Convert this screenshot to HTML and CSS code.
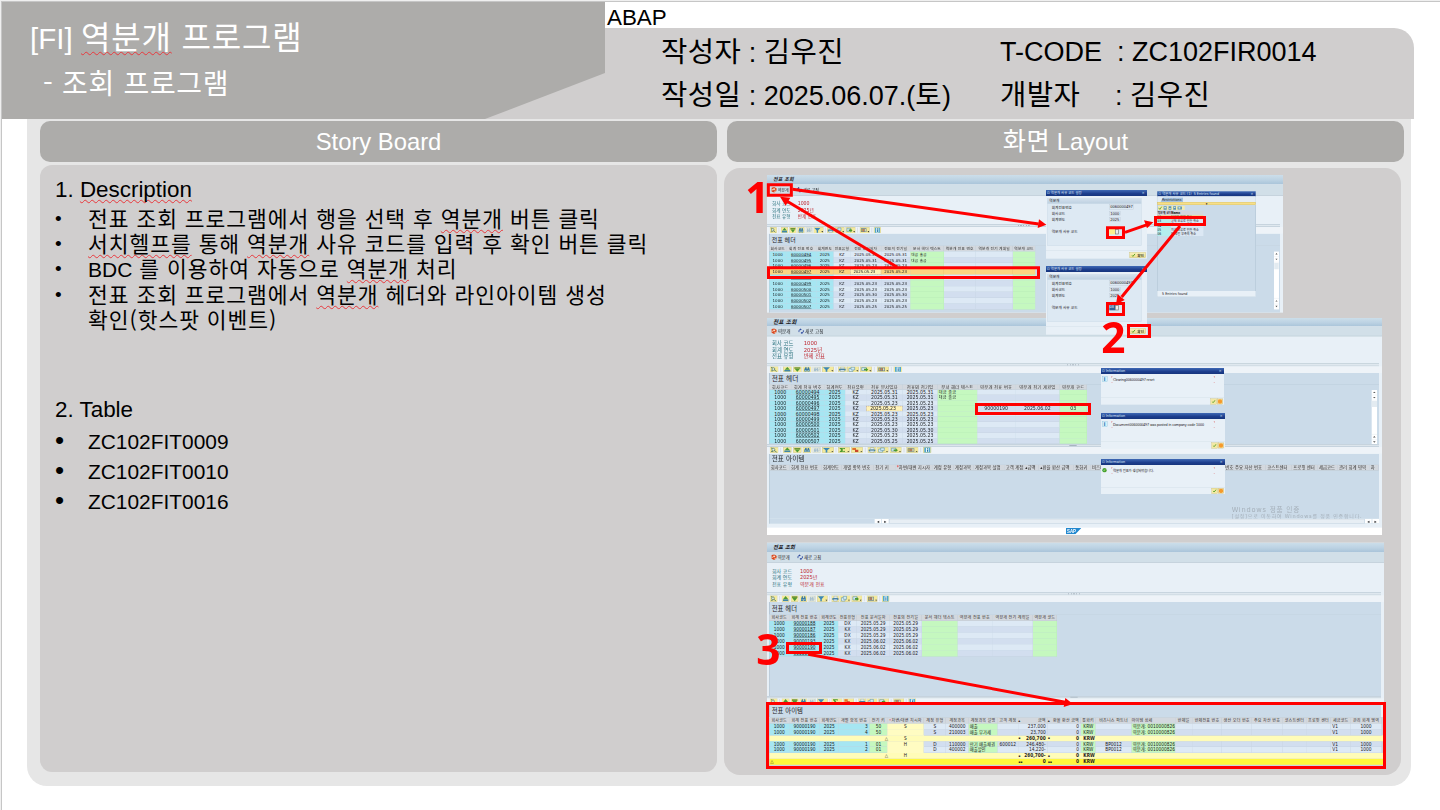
FILE: index.html
```html
<!DOCTYPE html>
<html lang="ko">
<head>
<meta charset="utf-8">
<title>[FI] 역분개 프로그램</title>
<link rel="stylesheet" href="styles.css">
</head>
<body>
<svg width="0" height="0" class="defs">
  <symbol id="i-btn" viewBox="0 0 26 20"><rect x=".5" y=".5" width="25" height="19" fill="#f4ea9c" stroke="#b9b68c"/></symbol>
  <symbol id="i-wide" viewBox="0 0 36 20"><rect x=".5" y=".5" width="35" height="19" fill="#f4ea9c" stroke="#b9b68c"/><path d="M28 13h6l-3 4z" fill="#333"/></symbol>
  <symbol id="i-detail" viewBox="0 0 26 20"><use href="#i-btn"/><circle cx="11" cy="9" r="4.5" fill="#dfeee8" stroke="#47705c" stroke-width="2"/><path d="M14 12l7 5M4 4h4M4 15h6" stroke="#47705c" stroke-width="2.4"/></symbol>
  <symbol id="i-up" viewBox="0 0 26 20"><use href="#i-btn"/><path d="M13 2l8 9H5z" fill="#4d9a35"/><path d="M4 12h18v5H4z" fill="#3f86a8"/></symbol>
  <symbol id="i-down" viewBox="0 0 26 20"><use href="#i-btn"/><path d="M13 18L5 8h16z" fill="#4d9a35"/><path d="M4 3h18v5H4z" fill="#6f9638"/></symbol>
  <symbol id="i-find" viewBox="0 0 26 20"><use href="#i-btn"/><path d="M8 3h4v5h3V3h4l2 7v7h-7v-5h-2v5H5v-7z" fill="#3c7ba4"/><path d="M7 12h3v3H7zM16 12h3v3h-3z" fill="#a9d4e6"/></symbol>
  <symbol id="i-next" viewBox="0 0 26 20"><rect x=".5" y=".5" width="25" height="19" fill="#e4e9dd" stroke="#c9cdb8"/><path d="M7 4h3v5h3V4h3l2 6v6h-5v-4h-2v4H5v-6z" fill="#a7bfce"/><path d="M18 4h4v8h-4" fill="none" stroke="#9fb6c3"/></symbol>
  <symbol id="i-filter" viewBox="0 0 36 20"><use href="#i-wide"/><path d="M3 3h21l-8 8v7h-5v-7z" fill="#3b87b8"/></symbol>
  <symbol id="i-sum" viewBox="0 0 36 20"><use href="#i-wide"/><path d="M5 3h16v5l-2-2h-7l4 4-4 4h7l2-2v5H5v-2l5-5-5-5z" fill="#4c9a2e"/></symbol>
  <symbol id="i-sub" viewBox="0 0 36 20"><use href="#i-wide"/><path d="M4 3h11v7H4z" fill="#e2742c"/><path d="M12 9h10v8H12z" fill="#c9462c"/></symbol>
  <symbol id="i-print" viewBox="0 0 26 20"><use href="#i-btn"/><path d="M8 3h11v5H8z" fill="#fff" stroke="#4d7a96"/><path d="M3 8h20v6H3z" fill="#4a84a6"/><path d="M7 12h12v5H7z" fill="#e8f3f8" stroke="#4d7a96"/></symbol>
  <symbol id="i-view" viewBox="0 0 36 20"><use href="#i-wide"/><path d="M6 7h12v10H6z" fill="#e9f5fa" stroke="#3d7d9f" stroke-width="1.500"/><path d="M12 3h11v9H12z" fill="#d3ebf4" stroke="#3d7d9f" stroke-width="1.500"/></symbol>
  <symbol id="i-export" viewBox="0 0 36 20"><use href="#i-wide"/><path d="M5 4h14v10H5z" fill="#cfe6ee" stroke="#3d7d9f" stroke-width="1.500"/><path d="M12 8h6V5l7 6-7 6v-4h-6z" fill="#4c9a2e"/></symbol>
  <symbol id="i-grid" viewBox="0 0 36 20"><use href="#i-wide"/><path d="M4 4h20v12H4z" fill="#6a8390"/><path d="M6 6h4v8H6z" fill="#d4af55"/><path d="M12 6h4v8h-4z" fill="#dd7b45"/><path d="M18 6h4v8h-4z" fill="#e6e2b0"/></symbol>
  <symbol id="i-info" viewBox="0 0 26 20"><use href="#i-btn"/><path d="M4 2h18v16H4z" fill="#4ea6cf"/><path d="M9 3h8v14H9z" fill="#eef9fd"/><path d="M12 4h3v3h-3zM12 8h3v8h-3z" fill="#256f9a"/></symbol>
  <symbol id="tb-head" viewBox="0 0 398 20" preserveAspectRatio="none">
    <use href="#i-detail" width="26" height="20"/><use href="#i-up" x="40" width="26" height="20"/><use href="#i-down" x="70" width="26" height="20"/><use href="#i-find" x="99" width="26" height="20"/><use href="#i-next" x="128" width="26" height="20"/><use href="#i-filter" x="157" width="36" height="20"/><use href="#i-print" x="205" width="26" height="20"/><use href="#i-view" x="232" width="36" height="20"/><use href="#i-export" x="271" width="36" height="20"/><use href="#i-grid" x="322" width="36" height="20"/><use href="#i-info" x="372" width="26" height="20"/>
    <path d="M33 2v16M199 2v16M314 2v16M365 2v16" stroke="#aab6bf"/>
  </symbol>
  <symbol id="tb-item" viewBox="0 0 486 20" preserveAspectRatio="none">
    <use href="#i-detail" width="26" height="20"/><use href="#i-up" x="40" width="26" height="20"/><use href="#i-down" x="70" width="26" height="20"/><use href="#i-find" x="99" width="26" height="20"/><use href="#i-next" x="128" width="26" height="20"/><use href="#i-filter" x="157" width="36" height="20"/><use href="#i-sum" x="205" width="36" height="20"/><use href="#i-sub" x="244" width="36" height="20"/><use href="#i-print" x="294" width="26" height="20"/><use href="#i-view" x="321" width="36" height="20"/><use href="#i-export" x="360" width="36" height="20"/><use href="#i-grid" x="410" width="36" height="20"/><use href="#i-info" x="460" width="26" height="20"/>
    <path d="M33 2v16M199 2v16M287 2v16M403 2v16M453 2v16" stroke="#aab6bf"/>
  </symbol>
  <symbol id="i-reverse" viewBox="0 0 20 18"><path d="M3 2l8-2 8 5-1 8-7 5-8-4z" fill="#d9461e"/><path d="M3 9l7-4-1-3 6 4-5 5v-3l-5 3zM12 13l4-2v3l-4 2z" fill="#fbe7cf"/></symbol>
  <symbol id="i-refresh" viewBox="0 0 20 18"><path d="M3 12a7 7 0 0 1 5-9M17 6a7 7 0 0 1-5 9" fill="none" stroke="#22409a" stroke-width="2.500"/><path d="M6 0l6 3-5 4zM14 18l-6-3 5-4z" fill="#22409a"/></symbol>
  <symbol id="i-ok" viewBox="0 0 14 12"><path d="M1 6l4 4 8-9" fill="none" stroke="#4c9a1e" stroke-width="3"/></symbol>
  <symbol id="i-scroll" viewBox="0 0 18 166" preserveAspectRatio="none"><path d="M0 0h18v166H0z" fill="#fff"/><path d="M1 33h16v18H1z" fill="#e3ebf1"/><path d="M5 9l4-4 4 4zM5 21l4 4 4-4zM5 143l4-4 4 4zM5 155l4 4 4-4z" fill="#555"/><path d="M0 15h18M0 31h18M0 134h18M0 150h18" stroke="#dbe3ea"/></symbol>
</svg>

<div class="slide">
  <header class="top">
    <div class="title">
      <h1><i>[FI]</i><span class="typo">역분개</span> 프로그램</h1>
      <h2>- 조회 프로그램</h2>
    </div>
    <div class="meta">
      <div class="lang">ABAP</div>
      <dl class="facts">
        <div><span class="k"><b>작성자</b> :</span> <b>김우진</b></div>
        <div class="tc">T-CODE&nbsp; : ZC102FIR0014</div>
        <div><span class="k"><b>작성일</b> :</span> 2025.06.07.(<b>토</b>)</div>
        <div class="dev"><b>개발자</b><span>: <b>김우진</b></span></div>
      </dl>
    </div>
  </header>

  <main class="board">
    <section class="col">
      <h3>Story Board</h3>
      <div class="story">
        <h4>1. <span class="typo">Description</span></h4>
        <ul class="desc">
          <li><span>전표 조회 프로그램에서 행을 선택 후 <span class="typo">역분개</span> 버튼 클릭</span></li>
          <li><span><span class="typo">서치헬프를</span> 통해 <span class="typo">역분개</span> 사유 코드를 입력 후 확인 버튼 클릭</span></li>
          <li><span><i>BDC</i> 를 이용하여 자동으로 <span class="typo">역분개</span> 처리</span></li>
          <li><span>전표 조회 프로그램에서 <span class="typo">역분개</span> 헤더와 라인아이템 생성<br>확인(핫스팟 이벤트)</span></li>
        </ul>
        <h4>2. Table</h4>
        <ul class="tables"><li>ZC102FIT0009</li><li>ZC102FIT0010</li><li>ZC102FIT0016</li></ul>
      </div>
    </section>

    <section class="col right">
      <h3><b>화면</b> Layout</h3>
      <div class="layout"><div class="fit"><div class="stage">

        <article class="win w1">
          <div class="bar">전표 조회</div>
          <div class="tools"><svg><use href="#i-reverse"/></svg><span>역분개</span><svg><use href="#i-refresh"/></svg><span>새로 고침</span></div>
          <div class="info"><span>회사 코드</span><em>1000</em><span>회계 연도</span><em>2025년</em><span>전표 유형</span><em>반제 전표</em></div>
          <div class="split"></div>
          <div class="icons"><svg><use href="#tb-head"/></svg></div>
          <div class="cap">전표 헤더</div>
          <div class="body">
          <div class="grid keyed">
            <div class="row th"><span>회사코드</span><span>회계 전표 번호</span><span>회계연도</span><span>전표유형</span><span>전표 문서일자</span><span>전표의 전기일</span><span>문서 헤더 텍스트</span><span>역분개 전표 번호</span><span>역분개 전기 계획일</span><span>역분개 코드</span></div>
            <div class="row"><span>1000</span><span>60000494</span><span>2025</span><span>KZ</span><span>2025.05.31</span><span>2025.05.31</span><span>대금 출금</span><span></span><span></span><span></span></div>
            <div class="row"><span>1000</span><span>60000495</span><span>2025</span><span>KZ</span><span>2025.05.31</span><span>2025.05.31</span><span>대금 출금</span><span></span><span></span><span></span></div>
            <div class="row"><span>1000</span><span>60000496</span><span>2025</span><span>KZ</span><span>2025.05.23</span><span>2025.05.23</span><span></span><span></span><span></span><span></span></div>
            <div class="row picked"><span>1000</span><span>60000497</span><span>2025</span><span>KZ</span><span class="edit">2025.05.23</span><span>2025.05.23</span><span></span><span></span><span></span><span></span></div>
            <div class="row"><span>1000</span><span>60000498</span><span>2025</span><span>KZ</span><span>2025.05.23</span><span>2025.05.23</span><span></span><span></span><span></span><span></span></div>
            <div class="row"><span>1000</span><span>60000499</span><span>2025</span><span>KZ</span><span>2025.05.23</span><span>2025.05.23</span><span></span><span></span><span></span><span></span></div>
            <div class="row"><span>1000</span><span>60000500</span><span>2025</span><span>KZ</span><span>2025.05.23</span><span>2025.05.23</span><span></span><span></span><span></span><span></span></div>
            <div class="row"><span>1000</span><span>60000501</span><span>2025</span><span>KZ</span><span>2025.05.30</span><span>2025.05.30</span><span></span><span></span><span></span><span></span></div>
            <div class="row"><span>1000</span><span>60000502</span><span>2025</span><span>KZ</span><span>2025.05.23</span><span>2025.05.23</span><span></span><span></span><span></span><span></span></div>
            <div class="row"><span>1000</span><span>60000507</span><span>2025</span><span>KZ</span><span>2025.05.25</span><span>2025.05.25</span><span></span><span></span><span></span><span></span></div>
          </div>
          <svg class="scroll"><use href="#i-scroll"/></svg>
          </div>
        </article>

        <article class="win w2">
          <div class="bar">전표 조회</div>
          <div class="tools"><svg><use href="#i-reverse"/></svg><span>역분개</span><svg><use href="#i-refresh"/></svg><span>새로 고침</span></div>
          <div class="info"><span>회사 코드</span><em>1000</em><span>회계 연도</span><em>2025년</em><span>전표 유형</span><em>반제 전표</em></div>
          <div class="split"></div>
          <div class="icons"><svg><use href="#tb-head"/></svg></div>
          <div class="cap">전표 헤더</div>
          <div class="body">
          <div class="grid keyed">
            <div class="row th"><span>회사코드</span><span>회계 전표 번호</span><span>회계연도</span><span>전표유형</span><span>전표 문서일자</span><span>전표의 전기일</span><span>문서 헤더 텍스트</span><span>역분개 전표 번호</span><span>역분개 전기 계획일</span><span>역분개 코드</span></div>
            <div class="row"><span>1000</span><span>60000494</span><span>2025</span><span>KZ</span><span>2025.05.31</span><span>2025.05.31</span><span>대금 출금</span><span></span><span></span><span></span></div>
            <div class="row"><span>1000</span><span>60000495</span><span>2025</span><span>KZ</span><span>2025.05.31</span><span>2025.05.31</span><span>대금 출금</span><span></span><span></span><span></span></div>
            <div class="row"><span>1000</span><span>60000496</span><span>2025</span><span>KZ</span><span>2025.05.23</span><span>2025.05.23</span><span></span><span></span><span></span><span></span></div>
            <div class="row"><span>1000</span><span>60000497</span><span>2025</span><span>KZ</span><span class="edit">2025.05.23</span><span>2025.05.23</span><span></span><span>90000190</span><span>2025.06.02</span><span>03</span></div>
            <div class="row"><span>1000</span><span>60000498</span><span>2025</span><span>KZ</span><span>2025.05.23</span><span>2025.05.23</span><span></span><span></span><span></span><span></span></div>
            <div class="row"><span>1000</span><span>60000499</span><span>2025</span><span>KZ</span><span>2025.05.23</span><span>2025.05.23</span><span></span><span></span><span></span><span></span></div>
            <div class="row"><span>1000</span><span>60000500</span><span>2025</span><span>KZ</span><span>2025.05.23</span><span>2025.05.23</span><span></span><span></span><span></span><span></span></div>
            <div class="row"><span>1000</span><span>60000501</span><span>2025</span><span>KZ</span><span>2025.05.30</span><span>2025.05.30</span><span></span><span></span><span></span><span></span></div>
            <div class="row"><span>1000</span><span>60000502</span><span>2025</span><span>KZ</span><span>2025.05.23</span><span>2025.05.23</span><span></span><span></span><span></span><span></span></div>
            <div class="row"><span>1000</span><span>60000507</span><span>2025</span><span>KZ</span><span>2025.05.25</span><span>2025.05.25</span><span></span><span></span><span></span><span></span></div>
          </div>
          <svg class="scroll"><use href="#i-scroll"/></svg>
          </div>
          <div class="split low"></div>
          <div class="icons"><svg class="wide"><use href="#tb-item"/></svg></div>
          <div class="cap">전표 아이템</div>
          <div class="body items">
            <div class="row th"><span>회사코드</span><span>회계 전표 번호</span><span>회계연도</span><span>개별 항목 번호</span><span>전기 키</span><span><u>*</u>차변/대변 지시자</span><span>계정 유형</span><span>계정과목</span><span>계정과목 설명</span><span>고객 계정</span><span>▴금액</span><span>▴환율 환산 금액</span><span>통화키</span><span>비즈니스 파트너</span><span>아이템 상세</span><span>반제일</span><span>생산 오더 번호</span><span>주요 자산 번호</span><span>코스트센터</span><span>프로핏 센터</span><span>세금코드</span><span>관리 회계 영역</span><span>차</span></div>
            <div class="mark"><strong>Windows 정품 인증</strong><span>[설정]으로 이동하여 Windows를 정품 인증합니다.</span></div>
          </div>
          <div class="hscroll"><span>◂</span><span>▸</span><div></div><span>◂</span><span>▸</span></div>
          <footer><svg viewBox="0 0 46 19"><path d="M0 0h46L28 19H0z" fill="#2288cf"/><text x="3" y="15" textLength="27" lengthAdjust="spacingAndGlyphs">SAP</text></svg></footer>
        </article>

        <article class="win w3">
          <div class="bar">전표 조회</div>
          <div class="tools"><svg><use href="#i-reverse"/></svg><span>역분개</span><svg><use href="#i-refresh"/></svg><span>새로 고침</span></div>
          <div class="info"><span>회사 코드</span><em>1000</em><span>회계 연도</span><em>2025년</em><span>전표 유형</span><em>역분개 전표</em></div>
          <div class="split"></div>
          <div class="icons"><svg><use href="#tb-head"/></svg></div>
          <div class="cap">전표 헤더</div>
          <div class="body">
          <div class="grid keyed">
            <div class="row th"><span>회사코드</span><span>회계 전표 번호</span><span>회계연도</span><span>전표유형</span><span>전표 문서일자</span><span>전표의 전기일</span><span>문서 헤더 텍스트</span><span>역분개 전표 번호</span><span>역분개 전기 계획일</span><span>역분개 코드</span></div>
            <div class="row"><span>1000</span><span>90000188</span><span>2025</span><span>DX</span><span>2025.05.29</span><span>2025.05.29</span><span></span><span></span><span></span><span></span></div>
            <div class="row"><span>1000</span><span>90000187</span><span>2025</span><span>KX</span><span>2025.05.29</span><span>2025.05.29</span><span></span><span></span><span></span><span></span></div>
            <div class="row"><span>1000</span><span>90000186</span><span>2025</span><span>DX</span><span>2025.05.29</span><span>2025.05.29</span><span></span><span></span><span></span><span></span></div>
            <div class="row"><span>1000</span><span>90000193</span><span>2025</span><span>KX</span><span>2025.06.02</span><span>2025.06.02</span><span></span><span></span><span></span><span></span></div>
            <div class="row"><span>1000</span><span>90000190</span><span>2025</span><span>KX</span><span>2025.06.02</span><span>2025.06.02</span><span></span><span></span><span></span><span></span></div>
            <div class="row"><span>1000</span><span>90000189</span><span>2025</span><span>KX</span><span>2025.06.02</span><span>2025.06.02</span><span></span><span></span><span></span><span></span></div>
          </div>
          </div>
          <div class="split low"></div>
          <div class="icons"><svg class="wide"><use href="#tb-item"/></svg></div>
          <div class="cap">전표 아이템</div>
          <div class="body items">
            <div class="row th"><span>회사코드</span><span>회계 전표 번호</span><span>회계연도</span><span>개별 항목 번호</span><span>전기 키</span><span><u>*</u>차변/대변 지시자</span><span>계정 유형</span><span>계정과목</span><span>계정과목 설명</span><span>고객 계정</span><span class="amt">금액</span><span class="amt">환율 환산 금액</span><span>통화키</span><span>비즈니스 파트너</span><span class="l">아이템 상세</span><span>반제일</span><span>반제전표 번호</span><span>생산 오더 번호</span><span>주요 자산 번호</span><span>코스트센터</span><span>프로핏 센터</span><span>세금코드</span><span>관리 회계 영역</span></div>
            <div class="row"><span>1000</span><span>90000190</span><span>2025</span><span>3</span><span>50</span><span>S</span><span>S</span><span>400000</span><span>매출</span><span></span><span>237,000</span><span>0</span><span>KRW</span><span></span><span>역분개: 0010000826</span><span></span><span></span><span></span><span></span><span></span><span></span><span>V1</span><span>1000</span></div>
            <div class="row"><span>1000</span><span>90000190</span><span>2025</span><span>4</span><span>50</span><span></span><span>S</span><span>210003</span><span>매출 부가세</span><span></span><span>23,700</span><span>0</span><span>KRW</span><span></span><span>역분개: 0010000826</span><span></span><span></span><span></span><span></span><span></span><span></span><span>V1</span><span>1000</span></div>
            <div class="row sum"><span></span><span></span><span></span><span></span><span>△</span><span>S</span><span></span><span></span><span></span><span></span><span><i>▪</i>260,700</span><span><i>▪</i>0</span><span>KRW</span></div>
            <div class="row"><span>1000</span><span>90000190</span><span>2025</span><span>1</span><span>01</span><span>H</span><span>D</span><span>110000</span><span>만기 매출채권</span><span>600012</span><span>246,480-</span><span>0</span><span>KRW</span><span>BP0012</span><span>역분개: 0010000826</span><span></span><span></span><span></span><span></span><span></span><span></span><span>V1</span><span>1000</span></div>
            <div class="row"><span>1000</span><span>90000190</span><span>2025</span><span>2</span><span>01</span><span></span><span>D</span><span>400002</span><span>매출할인</span><span></span><span>14,220-</span><span>0</span><span>KRW</span><span>BP0012</span><span>역분개: 0010000826</span><span></span><span></span><span></span><span></span><span></span><span></span><span>V1</span><span>1000</span></div>
            <div class="row sum"><span></span><span></span><span></span><span></span><span>△</span><span>H</span><span></span><span></span><span></span><span></span><span><i>▪</i>260,700-</span><span><i>▪</i>0</span><span>KRW</span></div>
            <div class="row sum total"><span>△</span><span></span><span></span><span></span><span></span><span></span><span></span><span></span><span></span><span></span><span><i>▪▪</i>0</span><span><i>▪▪</i>0</span><span>KRW</span></div>
          </div>
        </article>

        <!-- dialogs lying over the windows -->
        <div class="pop msg a"><div class="pt"><span>⊡ Information</span><span>×</span></div><div class="pm"><b class="ic">i</b><p>Clearing0060000497 reset</p></div><div class="pf"><svg><use href="#i-ok"/></svg><i></i></div></div>
        <div class="pop msg b"><div class="pt"><span>⊡ Information</span><span>×</span></div><div class="pm"><b class="ic">i</b><p>Document0060000497 was posted in company code 1000</p></div><div class="pf"><svg><use href="#i-ok"/></svg><i></i></div></div>
        <div class="pop msg c"><div class="pt"><span>⊡ Information</span><span>×</span></div><div class="pm"><b class="ic ok">✓</b><p>역분개 전표가 생성되었습니다.</p></div><div class="pf"><svg><use href="#i-ok"/></svg><i></i></div></div>

        <div class="pop ask d"><div class="pt"><span>⊡ 역분개 사유 코드 설정</span><span>×</span></div>
          <div class="box"><h5>역분개</h5><dl><dt>회계전표번호</dt><dd>0060000497</dd><dt>회사코드</dt><dd>1000</dd><dt>회계연도</dt><dd>2025</dd><dt class="gap">역분개 사유 코드</dt><dd class="gap in"><s></s><q></q></dd></dl></div>
          <div class="pf"><button><svg><use href="#i-ok"/></svg>확인</button></div></div>
        <div class="pop find f"><div class="pt"><span>⊡ 역분개 사유 코드 (1)&nbsp; 5 Entries found</span><span>×</span></div>
          <div class="tab"><span>Restrictions</span></div><div class="drop">▾</div>
          <div class="fi"><svg viewBox="0 0 88 15"><path d="M0 0h86v15H0z" fill="#f3ecb0"/><path d="M2 7l4 5 6-9" stroke="#4c9a1e" stroke-width="2.500" fill="none"/><path d="M18 2h10v11H18zM34 2h9v11h-9zM49 2h9v11h-9zM63 3h14v9H63z" fill="#5d95ae"/><path d="M20 5h6v3h-6zM36 8h5v3h-5zM51 4h5v3h-5zM66 5h6v4h-6z" fill="#eaf5f9"/></svg></div>
          <div class="frow fh"><span>역분개 코드</span><span>Name</span></div>
          <div class="frow sel"><span>01</span><span>당기의 반제 취소</span></div><div class="frow"><span>03</span><span>실제 오류로 인한 취소</span></div><div class="frow"><span>04</span><span></span></div><div class="frow"><span>05</span><span>지급 오류로 인한 취소</span></div><div class="frow"><span>06</span><span>인 경험 부족의 취소</span></div>
          <div class="ff">5 Entries found</div></div>
        <div class="pop ask e"><div class="pt"><span>⊡ 역분개 사유 코드 설정</span><span>×</span></div>
          <div class="box"><h5>역분개</h5><dl><dt>회계전표번호</dt><dd>0060000497</dd><dt>회사코드</dt><dd>1000</dd><dt>회계연도</dt><dd>2025</dd><dt class="gap">역분개 사유 코드</dt><dd class="gap in"><s class="on">03</s><q></q></dd></dl></div>
          <div class="pf"><button><svg><use href="#i-ok"/></svg>확인</button></div></div>

        <!-- step markers -->
        <svg class="marks" viewBox="-90 0 1950 1790">
          <g fill="none" stroke="#f00" stroke-width="9">
            <path d="M4 29.500h69v31H4zM4.500 278.500h810v29H4.500zM1021.500 158.500h48v29h-48zM1165.500 127.500h147v21h-147zM1021.500 385.500h48v33h-48zM1084.500 451.500h63v33h-63zM628.500 688.500h339v27h-339zM61.500 1405.500h99v27H61.500zM1.500 1585.500h1851v192H1.500z"/>
            <path d="M77 43L815 147M390 276L59 78M1074 172L1141 149M1239 153L1064 366M124 1438L895 1582"/>
          </g>
          <path d="M838 149l-26 10 4-26zM39 65l31 3-14 24zM1159 142l-19 18-9-24zM1047 388l5-30 21 17zM918 1587l-28 9 5-27z" fill="#f00"/>
          <g class="num"><text x="-65" y="113">1</text><text x="1003" y="533">2</text><text x="-32" y="1471">3</text></g>
        </svg>
      </div></div></div>
    </section>
  </main>
</div>
</body>
</html>
```
FILE: styles.css
```css
* { box-sizing: border-box; }
body { margin: 0; background: #fff; overflow: hidden; }
h1, h2, h3, h4, h5, ul, dl, dd, p { margin: 0; padding: 0; font-weight: 400; }
b, i, em { font-weight: 400; font-style: normal; }
.defs { position: absolute; }

.slide { width: 1440px; height: 810px; padding: 1px 0 0 1px; border-top: 1px solid #efefef; border-left: 1px solid #efefef; box-shadow: inset 1px 1px #c6c6c6; font-family: "Liberation Sans", "Noto Sans CJK KR", sans-serif; color: #000; white-space: nowrap; }

.top { display: flex; width: 1412px; height: 117px; background: linear-gradient(#d0cece, #d0cece) 400px 0 / 300px 117px no-repeat; }
.title { width: 603px; padding: 9px 0 0 28px; background: #adacaa; color: #fff; clip-path: polygon(0 0, 100% 0, 100% 71px, 483px 100%, 0 100%); font-family: "Noto Sans CJK KR", sans-serif; }
.title h1 { font-size: 32px; line-height: 48px; letter-spacing: .8px; }
.title h1 i { display: inline-block; width: 51px; font: 29.500px/40px "Liberation Sans", sans-serif; letter-spacing: 0; }
.title h2 { padding: 1px 0 0 13px; font-size: 28px; line-height: 44px; letter-spacing: .7px; }
.typo { text-decoration: underline wavy #e8383d 1px; text-decoration-skip-ink: none; text-underline-offset: 2px; }

.meta { flex: 1; display: flex; flex-direction: column; }
.lang { height: 26px; padding: 3px 0 0 2px; background: #fff; font-size: 22.400px; line-height: 26px; }
.facts { flex: 1; display: grid; grid-template-columns: 339px 1fr; grid-template-rows: 43px 43px; padding: 3px 0 0 56px; background: #d0cece; clip-path: inset(0 0 0 0 round 0 20px 0 0); font-size: 27px; line-height: 42px; }
.facts b, h3 b { font-size: 1.06em; letter-spacing: .4px; }
.dev { display: flex; }
.dev > b { width: 115px; }

.board { display: flex; gap: 10px; width: 1384px; height: 667px; margin-left: 25px; padding: 2px 7px 0 13px; background: #e6e6e6; border-radius: 0 0 20px 20px; }
.col { width: 677px; }
.col h3 { height: 41px; border-radius: 10px; background: #adacaa; color: #fff; font-size: 23.800px; line-height: 41px; text-align: center; }
.story { height: 607px; margin-top: 3px; padding: 11px 15px; border-radius: 12px; background: #d0cece; }
.story h4 { font-size: 22.400px; line-height: 28px; }
.story ul { list-style: none; }
.story li { display: flex; }
.story li::before { content: "•"; width: 33px; }
.desc { height: 192px; padding-top: 1px; font: 21.500px/25.200px "Noto Sans CJK KR", sans-serif; letter-spacing: .95px; }
.desc li::before { font: 19px/27px "Liberation Sans", sans-serif; letter-spacing: 0; }
.desc li { height: 25.2px; }
.desc i { font: 21px/1 "Liberation Sans", sans-serif; letter-spacing: 0; }
.tables { padding-top: 3px; font-size: 20.900px; line-height: 30px; }
.tables li::before { font-size: 26px; line-height: 27px; }
.layout { width: 677px; height: 607px; margin: 6px 0 0 -3px; padding: 7px 14px 0 13px; border-radius: 16px; background: #d0cece; }

/* The screen captures are laid out at three times their shown size. */
.fit { width: 650px; height: 598px; }
.stage { position: relative; width: 1950px; height: 1790px; padding-left: 90px; transform: scale(.33333); transform-origin: 0 0; font-family: "DejaVu Sans", "Noto Sans CJK KR", sans-serif; color: #1d2024; }

.win { display: flex; flex-direction: column; overflow: hidden; background: #e8f0f7; font-size: var(--f); }
.w1 { --f: 12px; --rh: 17.4px; --cols: 51px 90px 52px 50px 93px 87px 101px 95px 112px 67px; width: 1548px; height: 413px; --bar: 28px; --tool: 35px; --info: 84px; --line: 19px; --cap: 35px; --tb: 334px; --val: 77px; --lf: 14px; --cf: 18px; }
.w2 { --f: 14px; --rh: 16.2px; --cols: 66px 99px 63px 63px 109px 105px 119px 114px 133px 82px; width: 1845px; height: 651px; margin-top: 16px; --bar: 25px; --tool: 30px; --info: 81px; --line: 18px; --cap: 33px; --tb: 398px; --val: 95px; --lf: 16px; --cf: 20px;
  --icols: 61px 96px 61px 96px 64px 111px 64px 60px 92px 59px 45px 105px 50px 105px 115px 55px 154px 97px 78px 77px 60px 95px 28px; }
.w3 { --f: 13px; --rh: 17.7px; --cols: 60px 92px 55px 56px 98px 97px 107px 104px 122px 72px; width: 1851px; height: 673px; margin-top: 23px; --bar: 28px; --tool: 33px; --info: 88px; --line: 20px; --cap: 38px; --tb: 360px; --val: 84px; --lf: 15px; --cf: 19px;
  --icols: 60px 92px 56px 93px 53px 110px 66px 68px 87px 62px 88px 100px 44px 108px 131px 51px 89px 89px 93px 71px 74px 59px 93px; }
.win > * { flex-shrink: 0; }
.bar { height: var(--bar); padding-left: 18px; background: linear-gradient(#ccdeea, #bcd2e3 55%, #a9c4d9); font-size: calc(var(--cf) - 3px); font-weight: 700; font-style: italic; line-height: var(--bar); letter-spacing: .4px; }
.tools { display: flex; align-items: center; height: var(--tool); padding-left: 11px; background: #d1dfe8; border-bottom: 2px solid #c0ced9; }
.tools svg { width: 19px; height: 17px; margin-right: 2px; }
.tools span { margin-right: 22px; }
.info { display: grid; grid-template-columns: var(--val) 1fr; grid-auto-rows: 19px; align-content: center; height: var(--info); padding: 0 0 0 15px; color: #27707c; font-size: var(--lf); line-height: 19px; }
.info em { color: #bd2630; }
.split { height: 9px; margin-right: 9px; border: solid #bccbd6; border-width: 2px 0 2px; background: repeating-linear-gradient(90deg, #aab6c0 0 4px, transparent 4px 8px) 50% 50% / 36px 3px no-repeat, #dfe8ef; }
.split.low { background: linear-gradient(#a9b5c0, #a9b5c0) 50% 50% / 22px 3px no-repeat, #dce5ec; }
.icons { height: 20px; padding-left: 8px; background: #eef3f8; }
.icons svg { display: block; width: var(--tb); height: var(--line); }
.icons .wide { width: calc(var(--tb) * 1.221); }
.cap { height: var(--cap); margin: 0 9px 0 7px; padding-left: 5px; background: #cbdbe9; border-left: 2px solid #aabccb; font-size: var(--cf); line-height: var(--cap); }
.body { display: flex; justify-content: space-between; margin: 0 9px 0 7px; background: #cbdbe9; border-top: 1px solid #b5c6d5; box-shadow: inset 2px 0 #b2c3d1; }
.w1 .body { flex: 1; padding-right: 3px; }
.w1 .scroll { width: 15px; height: 175px; margin-top: 17px; }
.w2 .scroll { width: 18px; height: 165px; margin: 17px 5px 0 0; }
.w2 .body:not(.items) { height: 180px; }
.w3 .body:not(.items) { height: 244px; }
.w3 .split.low { height: 7px; }
.w3 .split.low + .icons { height: 19px; }
.row { display: grid; grid-template-columns: var(--cols); height: var(--rh); line-height: calc(var(--rh) + 1px); text-align: center; }
.row span { overflow: hidden; height: var(--rh); border: solid #c1cfde; border-width: 0 1px 1px 0; background: #dde9f5; }
.row:nth-child(odd) span { background: #d2deef; }
.row.th span { background: #d3d8de; border-color: #b9c3cd; color: #333; font-size: .93em; letter-spacing: .5px; }
.keyed .row:not(.th) span:nth-child(-n+3) { background: #a6e6f2; }
.keyed .row:not(.th) span:nth-child(2) { text-decoration: underline; }
.keyed .row:not(.th) span:nth-child(7), .keyed .row:not(.th) span:nth-child(10) { background: #c5f8bf; border-color: #b4e8b4; }
.keyed .row:not(.th) span:nth-child(7) { padding-left: 3px; text-align: left; font-size: .88em; letter-spacing: .8px; }
.keyed .row.picked span:nth-child(n) { background: #fdd680; border-color: #e6bd6a; }
.keyed .row .edit { background: #fff3b8 !important; outline: 1px dashed #976; outline-offset: -1px; padding-right: 8px; letter-spacing: -.3px; }
.items { display: block; position: relative; }
.items .row { grid-template-columns: var(--icols); }
.items .th span { overflow: visible; }
.items u { color: #e22; text-decoration: none; }
.w2 .items { height: 162px; overflow: hidden; }
.w2 .items .th { text-align: left; }
.w2 .items .th span { padding-left: 4px; letter-spacing: .1px; overflow: hidden; }
.w2 .items .th span:nth-child(17) { text-align: right; }
.w3 .items { flex: 1; background: #cdd5dc; margin-right: 0; overflow: hidden; }
.w3 .items .row:not(.th) span:nth-child(-n+4) { background: #a6e6f2; }
.w3 .items .row:not(.th) span:nth-child(4) { text-align: right; padding-right: 5px; }
.w3 .items .row:not(.th) span:nth-child(5), .w3 .items .row:not(.th) span:nth-child(9), .w3 .items .row:not(.th) span:nth-child(13), .w3 .items .row:not(.th) span:nth-child(15) { background: #c5f8bf; text-align: left; padding-left: 3px; }
.w3 .items .row:not(.th) span:nth-child(5) { padding-left: 18px; }
.w3 .items .row:not(.th) span:nth-child(13) { padding-left: 7px; }
.w3 .items .row:not(.th) span:nth-child(6) { background: #fffcc2; border-bottom-color: #fffcc2; }
.w3 .items .row span:nth-child(11), .w3 .items .row span:nth-child(12) { text-align: right; padding-right: 5px; }
.w3 .items .row:not(.th) span:nth-child(22) { text-align: left; padding-left: 4px; }
.w3 .items .row.sum:not(.th) span:nth-child(n) { background: none; border-color: transparent; }
.w3 .items .row.sum span:nth-child(n+11) { overflow: visible; font-weight: 700; }
.w3 .items .row.sum { background: #fffcb8; border-bottom: 1px solid #dfdca8; }
.w3 .items .row.total { background: #fff83c; }
.w3 .items .row.total span:first-child { text-align: left; padding-left: 3px; }
.w3 .items .row span:nth-child(5) { overflow: visible; }
.w3 .items .sum span:nth-child(5) { padding-left: 45px !important; }
.sum i { float: left; font-size: 9px; }
.l { text-align: left; }
.amt::before { content: "▴"; float: left; }
.mark { display: flex; flex-direction: column; position: absolute; left: 1387px; top: 123px; color: #a5b0ba; font-size: 15px; line-height: 20px; letter-spacing: 2.300px; }
.mark strong { font-size: 20px; font-weight: 400; }
.hscroll { display: flex; gap: 2px; height: 15px; margin: 0 9px 0 7px; padding: 1px 0 1px 314px; background: #cbdbe9; border-left: 2px solid #b2c3d1; font-size: 13px; line-height: 13px; text-align: center; }
.hscroll span { width: 20px; background: #fff; }
.hscroll div { flex: 1; border: 1px solid #c8d3dc; background: #e7eef4; }
footer { height: 22px; margin-top: auto; padding: 1px 0 0 897px; background: #fff; }
footer svg { display: block; width: 46px; height: 19px; }
footer text { fill: #fff; font: 700 14px "Liberation Sans", sans-serif; }

.pop { position: absolute; display: flex; flex-direction: column; background: #e8f0f7; font-size: 10px; }
.a { left: 1092px; top: 579px; width: 369px; height: 110px; }
.b { left: 1092px; top: 714px; width: 372px; height: 107px; }
.c { left: 1092px; top: 852px; width: 372px; height: 105px; }
.d { left: 927px; top: 45px; width: 303px; height: 206px; }
.e { left: 927px; top: 273px; width: 303px; height: 206px; }
.f { left: 1260px; top: 48px; width: 297px; height: 318px; }
.pt { display: flex; justify-content: space-between; height: 18px; padding: 0 7px 0 3px; background: linear-gradient(#3f69b5, #1c3d8c 60%, #16357d); color: #dfe9f8; line-height: 17px; }
.pm { display: flex; flex: 1; gap: 12px; padding: 7px 3px; }
.pm p { width: 311px; height: 19px; padding: 0 5px; line-height: 19px; letter-spacing: -.4px; background: linear-gradient(#d66, #d66) 0 0 / 4px 1px, linear-gradient(#d66, #d66) 0 0 / 1px 5px, linear-gradient(#d66, #d66) 0 100% / 4px 1px, linear-gradient(#d66, #d66) 100% 0 / 4px 1px, linear-gradient(#d66, #d66) 100% 0 / 1px 5px, linear-gradient(#d66, #d66) 100% 100% / 4px 1px; background-repeat: no-repeat; }
.ic { width: 16px; height: 17px; background: #d5edf8; border: 1px solid #88bfdc; color: #1272ae; font: 700 14px/15px "DejaVu Sans", sans-serif; text-align: center; }
.ic.ok { width: 13px; height: 13px; margin: 2px 2px 0 1px; border: 0; border-radius: 50%; background: #48a32e; color: #fff; font-size: 9px; line-height: 13px; }
.pf { display: flex; justify-content: flex-end; gap: 1px; height: 21px; padding: 2px 3px 2px; border-top: 1px solid #cdd9e4; }
.msg .pf svg, .msg .pf i { width: 18px; height: 17px; padding: 2px; background: #f3e9a4; border: 1px solid #c9bd7c; }
.msg .pf i { background: radial-gradient(circle, #f59a2c 5px, #f5d080 7px); }
.box { height: 144px; margin: 6px 16px 0 3px; border: 1px solid #c8d7e4; background: #dde9f3; }
.box h5 { height: 16px; padding-left: 6px; background: linear-gradient(#d4e1ed, #bdd0e0); font-size: 11px; line-height: 16px; }
.box dl { display: grid; grid-template-columns: 173px auto; grid-auto-rows: 18.500px; padding: 3px 0 0 13px; font-size: 11px; line-height: 17px; }
.box dd { justify-self: start; height: 15px; padding: 0 2px; border: 1px solid #b9c6d2; line-height: 13px; font-size: 11px; letter-spacing: -.3px; }
.box .gap { margin-top: 17px; }
.box .in { display: flex; padding: 0; border: 0; }
.in s { width: 17px; height: 16px; background: #fdf08e; text-decoration: none; }
.in s.on { background: #31649a; color: #fff; }
.in q { width: 12px; height: 16px; border: 2px solid #777; background: #eee; quotes: none; }
.ask .pf { height: auto; margin-top: 14px; padding-top: 3px; }
.ask button { display: flex; align-items: center; gap: 5px; height: 18px; padding: 0 5px; border: 1px solid #c6b968; background: linear-gradient(#faf3bf, #ecdd8b); font: 11px "DejaVu Sans", "Noto Sans CJK KR", sans-serif; }
.ask button svg { width: 13px; height: 11px; }
.find { background: #cbdbe9; border: 1px solid #9fb4c6; }
.find .pt { height: 15px; line-height: 14px; }
.tab { height: 17px; padding: 3px 0 0 9px; background: #e4edf5; }
.tab span { display: block; width: 68px; height: 14px; background: #a6c2df; text-align: center; line-height: 13px; clip-path: polygon(8px 0, 100% 0, 100% 100%, 0 100%); }
.drop { height: 9px; background: #f7df88; border: 1px solid #cdb96b; text-align: center; line-height: 8px; }
.fi { height: 18px; padding: 2px; }
.fi svg { display: block; width: 82px; height: 14px; }
.frow { display: grid; grid-template-columns: 41px 97px; height: 12.5px; font-size: 9px; line-height: 12px; }
.frow span { overflow: hidden; background: #dce8f4; }
.frow span:first-child { background: #b4edee; }
.frow.fh span { background: #d3d8de; font-weight: 700; letter-spacing: -.3px; }
.frow.sel span { background: #f8d67d; }
.ff { height: 17px; margin-top: auto; padding-left: 14px; background: #e8f0f7; line-height: 15px; }

.marks { position: absolute; left: 0; top: 0; width: 1950px; height: 1790px; }
.num { fill: #f00; font: 700 127px "Open Sans", sans-serif; }
```
